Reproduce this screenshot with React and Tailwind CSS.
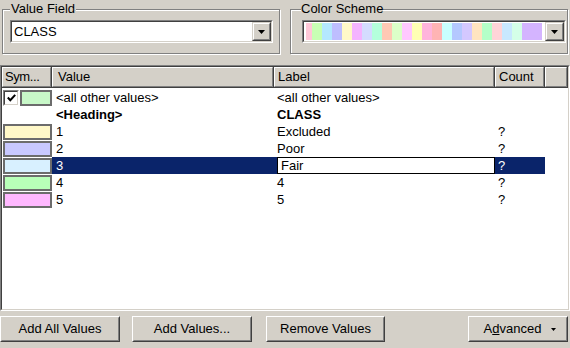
import React from "react"

const stripes = [
  ["#ffc8d8", 6], ["#c8ffb4", 10], ["#b4e8ff", 10], ["#bebeff", 10], ["#fff8c8", 10],
  ["#f4b4ff", 10], ["#d4dcff", 10], ["#b4ffdc", 10], ["#ffc8b4", 10], ["#dcffc8", 10],
  ["#ffc8ff", 10], ["#ffffb4", 10], ["#ffb4dc", 10], ["#ffb4b4", 10], ["#c8ffff", 10],
  ["#b4c8ff", 10], ["#d4c8ff", 10], ["#ffe4c0", 10], ["#b4ffc8", 10], ["#ffd4d8", 10],
  ["#c8e8ff", 10], ["#d4ffe8", 10], ["#d4b4ff", 20],
]

const rows = [
  { value: "1", label: "Excluded", color: "#fff8c8" },
  { value: "2", label: "Poor", color: "#c8c8ff" },
  { value: "3", label: "Fair", color: "#d8f0ff", selected: true },
  { value: "4", label: "4", color: "#b8ffb8" },
  { value: "5", label: "5", color: "#ffb8ff" },
]

function Arrow() {
  return (
    <svg width="7" height="4" viewBox="0 0 7 4">
      <polygon points="0,0 7,0 3.5,4" fill="#000" />
    </svg>
  )
}

function DropButton() {
  return (
    <div className="h-full w-[19px] border border-t-[#d4d0c8] border-l-[#d4d0c8] border-b-[#404040] border-r-[#404040]">
      <div className="h-full w-full bg-[#d4d0c8] border border-t-white border-l-white border-b-[#808080] border-r-[#808080] flex items-center justify-center">
        <Arrow />
      </div>
    </div>
  )
}

function Combo({ children }) {
  return (
    <div className="h-[23px] w-full border border-t-[#808080] border-l-[#808080] border-b-white border-r-white">
      <div className="h-full w-full bg-white border border-t-[#404040] border-l-[#404040] border-b-[#d4d0c8] border-r-[#d4d0c8] flex items-center">
        <div className="flex-1 h-full flex items-center">{children}</div>
        <DropButton />
      </div>
    </div>
  )
}

function HeaderCell({ children, pad = "pl-[3px]" }) {
  return (
    <div className="h-full border-r border-b border-r-[#404040] border-b-[#404040]">
      <div className={`h-full border border-t-white border-l-white border-r-[#808080] border-b-[#808080] ${pad} flex items-center overflow-hidden whitespace-nowrap`}>
        {children}
      </div>
    </div>
  )
}

function Swatch({ color, className = "" }) {
  return (
    <div
      className={`h-[16px] border-2 border-[#6c6c6c] ${className}`}
      style={{ background: color }}
    />
  )
}

function WinButton({ children, className = "" }) {
  return (
    <div className={`h-[26px] border border-t-white border-l-white border-b-[#404040] border-r-[#404040] ${className}`}>
      <div className="h-full w-full border border-t-[#d4d0c8] border-l-[#d4d0c8] border-b-[#808080] border-r-[#808080] flex items-center justify-center">
        {children}
      </div>
    </div>
  )
}

export default function App() {
  return (
    <div className="w-[570px] h-[348px] bg-[#d4d0c8] text-black text-[13px] leading-[14px] font-['Liberation_Sans',Arial,sans-serif] flex flex-col pt-[2px] overflow-hidden">
      <div className="flex pl-[2px]">
        <fieldset className="w-[278px] border border-[#808080] shadow-[inset_1px_1px_0_#fff,1px_1px_0_#fff] pl-[7px] pr-[6px] pb-[10px]">
          <legend className="px-[1px] bg-[#d4d0c8]">Value Field</legend>
          <div className="pt-[4px]">
            <Combo>
              <span className="pl-[2px]">CLASS</span>
            </Combo>
          </div>
        </fieldset>
        <fieldset className="ml-[10px] w-[278px] border border-[#808080] shadow-[inset_1px_1px_0_#fff,1px_1px_0_#fff] pl-[11px] pr-[1px] pb-[10px]">
          <legend className="ml-[-1px] px-0 bg-[#d4d0c8]">Color Scheme</legend>
          <div className="pt-[4px]">
            <Combo>
              <div className="flex h-[17px] pl-[2px]">
                {stripes.map(([c, w], i) => (
                  <div key={i} className="h-full" style={{ background: c, width: w }} />
                ))}
              </div>
            </Combo>
          </div>
        </fieldset>
      </div>

      <div className="mt-[11px] h-[246px] border border-t-[#808080] border-l-[#808080] border-b-white border-r-white">
        <div className="h-full bg-white border border-t-[#404040] border-l-[#404040] border-b-[#d4d0c8] border-r-[#d4d0c8] flex flex-col">
          <div className="h-[21px] grid grid-cols-[50px_222px_221px_50px_1fr] bg-[#d4d0c8]">
            <HeaderCell pad="pl-[2px] tracking-[-0.4px]">Sym...</HeaderCell>
            <HeaderCell><span className="pl-[2px]">Value</span></HeaderCell>
            <HeaderCell>Label</HeaderCell>
            <HeaderCell>Count</HeaderCell>
            <HeaderCell />
          </div>

          <div className="pt-[1px]">
            <div className="h-[17px] grid grid-cols-[50px_222px_221px_50px_1fr] items-center">
              <div className="flex items-center h-full">
                <div className="ml-[1px] w-[16px] h-[16px] shrink-0 border border-t-[#808080] border-l-[#808080] border-b-white border-r-white">
                  <div className="w-full h-full bg-white border border-t-[#404040] border-l-[#404040] border-b-[#d4d0c8] border-r-[#d4d0c8] flex items-center justify-center">
                    <svg width="9" height="8" viewBox="0 0 9 8">
                      <path d="M0.8 3.5 L3.3 6.2 L8.2 0.8" fill="none" stroke="#000" strokeWidth="2" />
                    </svg>
                  </div>
                </div>
                <Swatch color="#c8f8c8" className="ml-[1px] w-[32px] mt-[1px]" />
              </div>
              <div className="pl-[4px] whitespace-nowrap">&lt;all other values&gt;</div>
              <div className="pl-[3px] whitespace-nowrap">&lt;all other values&gt;</div>
              <div />
              <div />
            </div>

            <div className="h-[17px] grid grid-cols-[50px_222px_221px_50px_1fr] items-center font-bold">
              <div />
              <div className="pl-[4px]">&lt;Heading&gt;</div>
              <div className="pl-[3px]">CLASS</div>
              <div />
              <div />
            </div>

            {rows.map((r) => (
              <div key={r.value} className="h-[17px] grid grid-cols-[50px_222px_221px_50px_1fr] items-center">
                <div className="h-full flex items-center pl-[1px]">
                  <Swatch color={r.color} className="w-[49px]" />
                </div>
                <div className={`h-full flex items-center pl-[4px] ${r.selected ? "bg-[#0a246a] text-white" : ""}`}>
                  {r.value}
                </div>
                <div className={`h-full flex items-center ${r.selected ? "bg-[#0a246a]" : "pl-[3px]"}`}>
                  {r.selected ? (
                    <div className="ml-[3px] w-[219px] h-full border border-black bg-white text-black flex items-center pl-[3px]">
                      {r.label}
                    </div>
                  ) : (
                    r.label
                  )}
                </div>
                <div className={`h-full flex items-center pl-[3px] ${r.selected ? "bg-[#0a246a] text-white" : ""}`}>
                  ?
                </div>
                <div />
              </div>
            ))}
          </div>
        </div>
      </div>

      <div className="mt-[5px] flex">
        <WinButton className="w-[120px]">Add All Values</WinButton>
        <WinButton className="ml-[12px] w-[120px]">Add Values...</WinButton>
        <WinButton className="ml-[14px] w-[119px]">Remove Values</WinButton>
        <WinButton className="ml-auto mr-[2px] w-[100px]">
          <span className="ml-[4px]">
            A<span className="underline">d</span>vanced
          </span>
          <svg className="ml-[10px]" width="5" height="3" viewBox="0 0 5 3">
            <polygon points="0,0 5,0 2.5,3" fill="#000" />
          </svg>
        </WinButton>
      </div>
    </div>
  )
}
